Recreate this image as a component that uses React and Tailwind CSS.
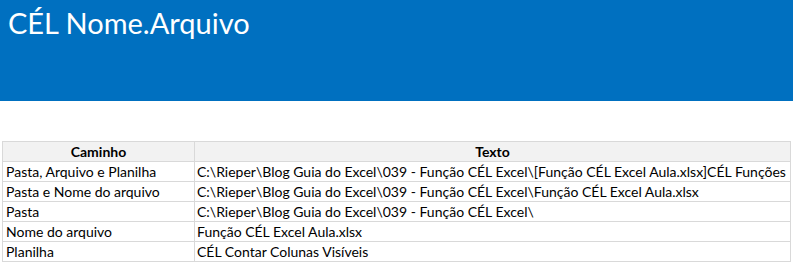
const rows = [
  ["Pasta, Arquivo e Planilha", "C:\\Rieper\\Blog Guia do Excel\\039 - Função CÉL Excel\\[Função CÉL Excel Aula.xlsx]CÉL Funções"],
  ["Pasta e Nome do arquivo", "C:\\Rieper\\Blog Guia do Excel\\039 - Função CÉL Excel\\Função CÉL Excel Aula.xlsx"],
  ["Pasta", "C:\\Rieper\\Blog Guia do Excel\\039 - Função CÉL Excel\\"],
  ["Nome do arquivo", "Função CÉL Excel Aula.xlsx"],
  ["Planilha", "CÉL Contar Colunas Visíveis"],
];

export default function App() {
  return (
    <div className="w-[793px] h-[265px] bg-white font-['Lato',sans-serif] text-black overflow-hidden">
      {/* Banner */}
      <div className="h-[101px] bg-[#0070c0] px-2 pt-[5px]">
        <h1 className="text-[29px] leading-[36px] text-white">CÉL Nome.Arquivo</h1>
      </div>

      {/* Table */}
      <div className="pt-10 pl-[2px]">
        <table className="table-fixed w-[788px] border-collapse text-[14px] leading-[19px]">
          <colgroup>
            <col className="w-[192px]" />
            <col className="w-[596px]" />
          </colgroup>
          <thead>
            <tr className="bg-[#f2f2f2] h-5">
              <th className="border border-[#d9d9d9] font-bold text-center p-0">Caminho</th>
              <th className="border border-[#d9d9d9] font-bold text-center p-0">Texto</th>
            </tr>
          </thead>
          <tbody>
            {rows.map(([a, b]) => (
              <tr key={a} className="h-5">
                <td className="border border-[#d9d9d9] px-[3px] py-0 whitespace-nowrap overflow-hidden">{a}</td>
                <td className="border border-[#d9d9d9] px-[2px] py-0 whitespace-nowrap overflow-hidden">{b}</td>
              </tr>
            ))}
          </tbody>
        </table>
      </div>
    </div>
  );
}
